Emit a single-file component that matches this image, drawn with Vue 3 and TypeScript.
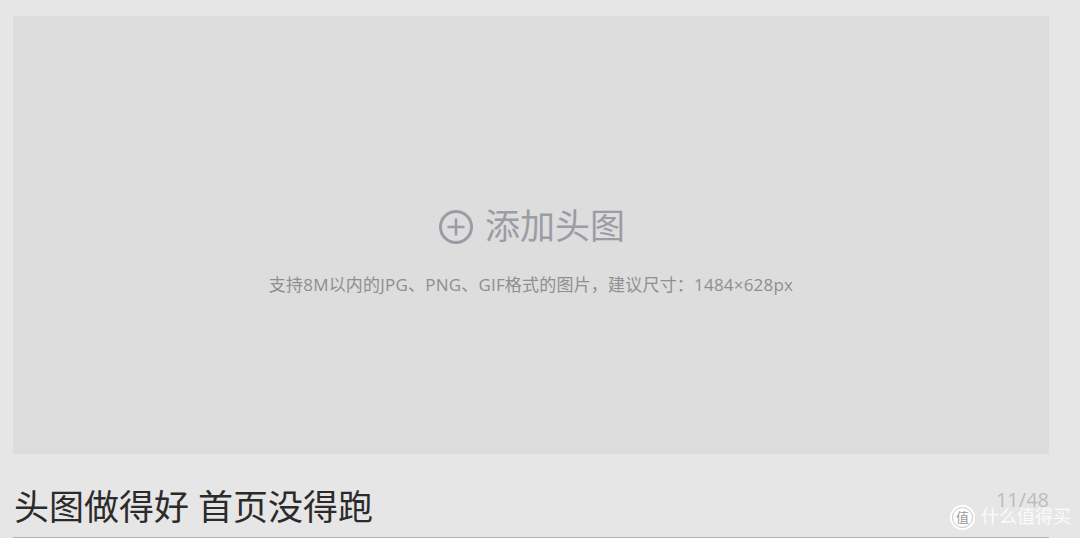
<script setup lang="ts">
const title = '头图做得好 首页没得跑'
const count = '11/48'
</script>

<template>
  <div class="page">
    <div class="cover">
      <div class="add">
        <svg class="plus" width="36" height="36" viewBox="0 0 36 36" fill="none" stroke="#9b9ca4" stroke-width="3">
          <circle cx="18" cy="18" r="15.5" />
          <path d="M18 9.5v17M9.5 18h17" stroke-width="2.6" />
        </svg>
        <span class="add-text">添加头图</span>
      </div>
      <p class="hint">支持8M以内的JPG、PNG、GIF格式的图片，建议尺寸：1484×628px</p>
    </div>
    <div class="title-row">
      <span class="title">{{ title }}</span>
      <span class="count">{{ count }}</span>
    </div>
    <div class="mark">
      <span class="mark-logo"><span class="mark-ring">值</span></span>
      <span class="mark-text">什么值得买</span>
    </div>
  </div>
</template>

<style>
html, body { margin: 0; background: #e6e6e6; overflow: hidden; }
</style>

<style scoped>
.page {
  position: relative;
  box-sizing: border-box;
  width: 1080px;
  height: 538px;
  padding: 16px 31px 0 13px;
  background: #e6e6e6;
  font-family: "Open Sans", "Noto Sans CJK SC", sans-serif;
  overflow: hidden;
}
.cover {
  height: 438px;
  background: #dddddd;
  display: flex;
  flex-direction: column;
  align-items: center;
  padding-top: 188px;
  box-sizing: border-box;
}
.add {
  display: flex;
  align-items: center;
  gap: 11px;
  height: 44px;
  padding-left: 1px;
}
.plus {
  margin-top: 1px;
}
.add-text {
  font-size: 35px;
  line-height: 44px;
  color: #9b9ca4;
}
.hint {
  margin: 27px 0 0;
  font-size: 17px;
  line-height: 20px;
  letter-spacing: 0.2px;
  color: #8f8f8f;
}
.title-row {
  height: 84px;
  box-sizing: border-box;
  display: flex;
  justify-content: space-between;
  align-items: flex-start;
  padding-top: 29px;
  border-bottom: 1px solid #b5b5b5;
}
.title {
  font-size: 35px;
  line-height: 48px;
  color: #2b2b2b;
  padding-left: 1px;
}
.count {
  font-size: 20px;
  line-height: 32px;
  font-weight: 500;
  color: #bcbcbc;
  padding-top: 1px;
}
.mark {
  position: absolute;
  left: 950px;
  top: 504px;
  display: flex;
  align-items: center;
  gap: 6px;
  color: rgba(255, 255, 255, 0.85);
}
.mark-logo {
  box-sizing: border-box;
  width: 25px;
  height: 25px;
  padding: 2px;
  border-radius: 50%;
  background: #fff;
}
.mark-ring {
  display: block;
  box-sizing: border-box;
  height: 21px;
  border: 1px solid #c4c4c4;
  border-radius: 50%;
  color: #9a9a9a;
  font-size: 13px;
  line-height: 19px;
  text-align: center;
}
.mark-text {
  font-size: 18px;
  line-height: 24px;
  margin-bottom: 2px;
}
</style>
